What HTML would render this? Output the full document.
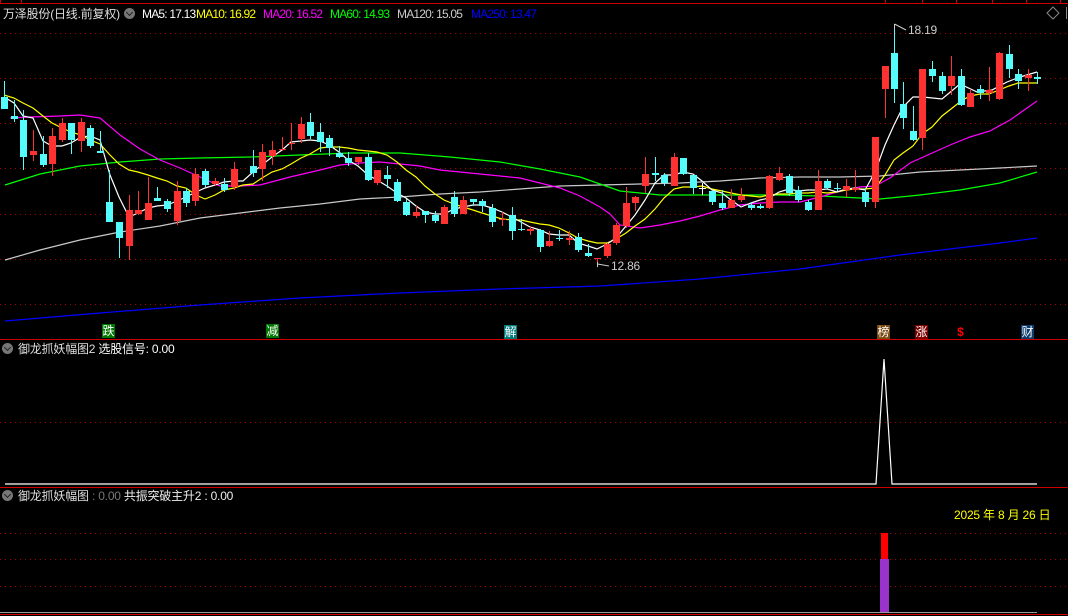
<!DOCTYPE html>
<html><head><meta charset="utf-8"><style>
html,body{margin:0;padding:0;background:#000;}
body{width:1068px;height:616px;overflow:hidden;position:relative;font-family:"Liberation Sans","Noto Sans CJK SC",sans-serif;}
.t{position:absolute;font-size:12px;white-space:nowrap;line-height:14px;letter-spacing:-0.2px;}
.m{letter-spacing:-0.8px;}
.ic{position:absolute;width:11px;height:11px;border-radius:50%;background:#777;}
.ic:after{content:"";position:absolute;left:3px;top:2px;width:4px;height:4px;border-right:1.5px solid #222;border-bottom:1.5px solid #222;transform:rotate(45deg);}
.lb{position:absolute;font-size:12px;line-height:14px;width:13px;height:14px;text-align:center;color:#fff;}
</style></head><body>
<svg width="1068" height="616" style="position:absolute;left:0;top:0">
<g stroke="#c00" stroke-width="1" fill="none">
<line x1="0" y1="3.5" x2="1068" y2="3.5"/>
<line x1="0.5" y1="0" x2="0.5" y2="3"/><line x1="21.5" y1="0" x2="21.5" y2="3"/>
<line x1="885.5" y1="0" x2="885.5" y2="3"/><line x1="922.5" y1="0" x2="922.5" y2="3"/><line x1="956.5" y1="0" x2="956.5" y2="3"/><line x1="992.5" y1="0" x2="992.5" y2="3"/><line x1="1026.5" y1="0" x2="1026.5" y2="3"/><line x1="1060.5" y1="0" x2="1060.5" y2="3"/>
<line x1="0" y1="339.5" x2="1068" y2="339.5"/>
<line x1="0" y1="487.5" x2="1068" y2="487.5"/>
<line x1="0" y1="614.5" x2="1068" y2="614.5"/>
</g>
<g stroke="#a00" stroke-width="1" stroke-dasharray="1,4">
<line x1="0" y1="33.5" x2="1068" y2="33.5"/><line x1="0" y1="78.5" x2="1068" y2="78.5"/><line x1="0" y1="123.5" x2="1068" y2="123.5"/><line x1="0" y1="168.5" x2="1068" y2="168.5"/><line x1="0" y1="214.5" x2="1068" y2="214.5"/><line x1="0" y1="259.5" x2="1068" y2="259.5"/><line x1="0" y1="304.5" x2="1068" y2="304.5"/>
<line x1="0" y1="422.5" x2="1068" y2="422.5"/>
<line x1="0" y1="533.5" x2="1068" y2="533.5"/><line x1="0" y1="559.5" x2="1068" y2="559.5"/><line x1="0" y1="586.5" x2="1068" y2="586.5"/>
</g>
<path d="M1053 7 L1059 13 L1053 19 L1047 13 Z" stroke="#888" fill="none"/>
<line x1="1066.5" y1="7" x2="1066.5" y2="19" stroke="#888"/>
<g fill="none" stroke-width="1.2">
<polyline stroke="#0000ff" points="5,321 100,313 200,305 300,298 400,293 500,289 600,286 700,279 800,269 900,255 1000,243 1037,238"/>
<polyline stroke="#c8c8c8" points="5,260 40,250 80,240 120,232 160,226 200,218 240,213 280,208 320,204 360,199 400,197 440,194 480,192 520,189 560,186 600,185 640,184 680,183 720,181 760,178 800,177 840,177 880,176 920,172 960,170 1000,168 1037,166"/>
<polyline stroke="#00ff00" points="5,185 40,174 80,166 120,162 160,159 200,158 250,157 300,155 350,153 400,153 450,157 500,162 540,169 580,177 620,191 660,195 700,195 740,195 780,195 820,196 860,198 880,199 920,195 960,190 1000,183 1037,172"/>
<polyline stroke="#ff00ff" points="10,118 30,117 60,116 80,115 100,118 120,135 140,149 160,160 180,168 200,177 220,186 240,186 260,185 290,177 320,170 340,165 360,163 380,162 400,164 420,166 440,170 460,172 480,174 500,176 520,178 540,183 560,188 580,196 600,207 610,214 620,225 640,228 660,225 680,221 700,216 720,210 740,205 760,203 780,202 800,202 820,197 840,191 860,187 875,186 890,178 910,163 930,154 950,145 970,137 990,131 1010,120 1037,101"/>
<polyline stroke="#ffff00" points="4,95 14,98 23,103 33,108 43,116 52,123 62,128 71,132 81,135 90,140 100,144 110,155 119,164 129,170 138,172 148,175 157,178 167,181 177,186 186,188 196,195 205,199 215,195 224,190 234,188 243,185 253,184 262,178 272,172 282,169 291,164 301,158 310,154 320,148 329,147 339,147 348,148 358,150 368,151 377,152 387,155 397,162 406,170 416,177 425,186 435,194 444,200 454,204 463,207 473,210 482,213 492,216 502,219 512,220 521,220 530,222 540,224 549,225 559,228 569,233 578,238 588,241 597,243 607,243 616,239 626,233 635,226 645,219 655,209 664,198 674,189 683,187 693,187 702,186 712,189 722,191 731,193 741,195 751,196 760,197 769,195 779,194 789,194 798,193 808,193 818,192 827,193 837,192 846,190 855,189 865,189 875,188 885,175 894,160 903,153 913,146 922,134 932,127 942,116 951,109 961,101 970,96 980,94 989,94 999,90 1009,86 1018,83 1028,83 1037,83"/>
<polyline stroke="#ffffff" points="4,97 14,103 23,116 33,118 43,141 52,146 62,146 71,143 81,137 90,136 100,140 110,175 119,197 129,217 138,213 148,208 157,206 167,205 177,201 186,197 196,192 205,188 215,185 224,182 234,181 243,181 253,172 262,165 272,157 282,150 291,142 301,141 310,140 320,141 329,145 339,152 348,160 358,166 368,175 377,180 387,186 397,193 406,198 416,206 425,212 435,214 444,214 454,209 463,207 473,205 482,205 492,208 502,212 512,217 521,222 530,227 540,230 549,234 559,235 569,235 578,243 588,246 597,249 607,244 616,238 626,226 635,215 645,200 655,183 664,175 674,175 683,172 693,174 702,181 712,190 722,193 731,200 741,207 751,203 760,200 769,198 779,192 789,189 798,191 808,190 818,190 827,189 837,192 846,189 855,188 865,190 875,172 885,145 894,125 903,107 913,97 923,97 942,99 960,84 977,92 992,90 1007,82 1020,77 1037,72"/>
</g>
<path stroke="#54fcfc" stroke-width="1" fill="none" d="M4.5 81V109M14.5 100V122M23.5 110V170M43.5 136V167M71.5 123V154M90.5 125V148M100.5 131V153M109.5 170V222M119.5 222V258M157.5 187V201M167.5 199V212M186.5 188V207M205.5 169V187M224.5 178V192M253.5 150V177M310.5 113V139M320.5 123V152M329.5 135V156M339.5 146V158M348.5 152V166M368.5 153V181M387.5 166V188M397.5 179V202M406.5 199V216M425.5 211V223M435.5 211V223M454.5 191V217M473.5 199V206M482.5 199V212M492.5 204V227M512.5 207V240M521.5 219V231M540.5 229V252M559.5 230V241M578.5 233V252M588.5 244V257M655.5 157V181M664.5 173V186M683.5 158V175M693.5 175V194M712.5 191V205M722.5 190V210M751.5 202V210M760.5 204V209M789.5 174V196M798.5 186V202M808.5 200V211M827.5 179V190M837.5 183V191M865.5 188V207M894.5 24V103M903.5 82V129M913.5 106V141M932.5 61V82M942.5 72V94M961.5 69V106M980.5 85V99M1009.5 45V78M1018.5 69V89M1037.5 72V84"/>
<g fill="#54fcfc">
<rect x="1" y="97" width="7" height="12"/><rect x="11" y="116" width="7" height="3"/><rect x="20" y="120" width="7" height="37"/><rect x="40" y="154" width="7" height="11"/><rect x="68" y="123" width="7" height="17"/><rect x="87" y="128" width="7" height="18"/><rect x="97" y="151" width="7" height="2"/><rect x="106" y="202" width="7" height="20"/><rect x="116" y="222" width="7" height="16"/><rect x="154" y="198" width="7" height="3"/><rect x="164" y="201" width="7" height="8"/><rect x="183" y="191" width="7" height="12"/><rect x="202" y="171" width="7" height="14"/><rect x="221" y="184" width="7" height="6"/><rect x="250" y="166" width="7" height="7"/><rect x="307" y="122" width="7" height="14"/><rect x="317" y="132" width="7" height="10"/><rect x="326" y="138" width="7" height="10"/><rect x="336" y="153" width="7" height="4"/><rect x="345" y="158" width="7" height="5"/><rect x="365" y="157" width="7" height="23"/><rect x="384" y="175" width="7" height="4"/><rect x="394" y="182" width="7" height="19"/><rect x="403" y="202" width="7" height="13"/><rect x="422" y="211" width="7" height="4"/><rect x="432" y="215" width="7" height="6"/><rect x="451" y="197" width="7" height="17"/><rect x="470" y="199" width="7" height="3"/><rect x="479" y="201" width="7" height="5"/><rect x="489" y="208" width="7" height="14"/><rect x="509" y="215" width="7" height="16"/><rect x="518" y="229" width="7" height="1"/><rect x="537" y="230" width="7" height="17"/><rect x="556" y="238" width="7" height="1"/><rect x="575" y="237" width="7" height="13"/><rect x="585" y="253" width="7" height="3"/><rect x="652" y="173" width="7" height="2"/><rect x="661" y="175" width="7" height="8"/><rect x="680" y="158" width="7" height="16"/><rect x="690" y="175" width="7" height="13"/><rect x="709" y="191" width="7" height="11"/><rect x="719" y="203" width="7" height="5"/><rect x="748" y="205" width="7" height="3"/><rect x="757" y="206" width="7" height="2"/><rect x="786" y="176" width="7" height="17"/><rect x="795" y="190" width="7" height="10"/><rect x="805" y="202" width="7" height="8"/><rect x="824" y="181" width="7" height="7"/><rect x="834" y="188" width="7" height="1"/><rect x="862" y="192" width="7" height="10"/><rect x="891" y="53" width="7" height="36"/><rect x="900" y="104" width="7" height="14"/><rect x="910" y="131" width="7" height="9"/><rect x="929" y="69" width="7" height="7"/><rect x="939" y="76" width="7" height="15"/><rect x="958" y="76" width="7" height="29"/><rect x="977" y="89" width="7" height="4"/><rect x="1006" y="54" width="7" height="15"/><rect x="1015" y="74" width="7" height="7"/><rect x="1034" y="77" width="7" height="2"/>
</g>
<path stroke="#ff3232" stroke-width="1" fill="none" d="M33.5 130V161M52.5 128V176M62.5 118V142M81.5 118V152M129.5 195V260M138.5 191V215M148.5 177V220M177.5 181V225M195.5 168V206M215.5 178V186M234.5 162V190M262.5 144V181M272.5 141V165M282.5 137V151M291.5 123V150M301.5 117V143M358.5 157V165M377.5 170V185M416.5 206V218M444.5 205V224M463.5 196V214M502.5 212V226M530.5 226V235M549.5 231V247M569.5 231V245M597.5 258V263M607.5 243V258M616.5 223V245M626.5 187V228M635.5 196V211M645.5 157V193M674.5 153V186M731.5 189V208M741.5 188V202M769.5 175V209M779.5 167V181M818.5 170V210M846.5 179V197M855.5 170V192M875.5 137V208M885.5 66V118M922.5 69V150M951.5 56V95M970.5 89V107M989.5 67V101M999.5 52V100M1028.5 69V91"/>
<g fill="#ff3232">
<rect x="30" y="151" width="7" height="4"/><rect x="49" y="136" width="7" height="28"/><rect x="59" y="123" width="7" height="17"/><rect x="78" y="122" width="7" height="19"/><rect x="126" y="210" width="7" height="36"/><rect x="135" y="210" width="7" height="4"/><rect x="145" y="203" width="7" height="17"/><rect x="174" y="191" width="7" height="30"/><rect x="192" y="174" width="7" height="27"/><rect x="212" y="181" width="7" height="3"/><rect x="231" y="169" width="7" height="18"/><rect x="259" y="152" width="7" height="17"/><rect x="269" y="150" width="7" height="6"/><rect x="279" y="149" width="7" height="1"/><rect x="288" y="143" width="7" height="1"/><rect x="298" y="124" width="7" height="15"/><rect x="355" y="157" width="7" height="5"/><rect x="374" y="170" width="7" height="13"/><rect x="413" y="212" width="7" height="4"/><rect x="441" y="207" width="7" height="17"/><rect x="460" y="200" width="7" height="14"/><rect x="499" y="219" width="7" height="1"/><rect x="527" y="229" width="7" height="2"/><rect x="546" y="241" width="7" height="5"/><rect x="566" y="238" width="7" height="2"/><rect x="594" y="258" width="7" height="1"/><rect x="604" y="244" width="7" height="12"/><rect x="613" y="225" width="7" height="18"/><rect x="623" y="203" width="7" height="23"/><rect x="632" y="197" width="7" height="6"/><rect x="642" y="174" width="7" height="12"/><rect x="671" y="157" width="7" height="29"/><rect x="728" y="200" width="7" height="8"/><rect x="738" y="196" width="7" height="4"/><rect x="766" y="176" width="7" height="32"/><rect x="776" y="173" width="7" height="7"/><rect x="815" y="181" width="7" height="29"/><rect x="843" y="186" width="7" height="4"/><rect x="852" y="188" width="7" height="2"/><rect x="872" y="137" width="7" height="65"/><rect x="882" y="66" width="7" height="23"/><rect x="919" y="69" width="7" height="69"/><rect x="948" y="76" width="7" height="10"/><rect x="967" y="93" width="7" height="14"/><rect x="986" y="90" width="7" height="3"/><rect x="996" y="53" width="7" height="46"/><rect x="1025" y="75" width="7" height="3"/>
</g>
<path stroke="#fff" d="M702.5 183V195M699 188.5H706" fill="none"/>
<path stroke="#ccc" fill="none" d="M894.5 24V30M894.5 24L906 30"/>
<path stroke="#ccc" fill="none" d="M597.5 262V267M597.5 264L609 266"/>
<polyline fill="none" stroke="#fff" stroke-width="1.2" points="5,484 876,484 884,359 892,484 1037,484"/>
<rect x="881" y="533" width="7" height="26" fill="#ff0000"/>
<rect x="880" y="559" width="9" height="53" fill="#9933cc"/>
<line x1="0" y1="612.5" x2="1037" y2="612.5" stroke="#999"/>
</svg>
<div class="t" style="left:3px;top:7px;color:#ddd">万泽股份(日线.前复权)</div>
<span class="ic" style="left:124px;top:8px"></span>
<div class="t m" style="left:142px;top:7px;color:#fff">MA5: 17.13</div>
<div class="t m" style="left:196px;top:7px;color:#ff0">MA10: 16.92</div>
<div class="t m" style="left:263px;top:7px;color:#f0f">MA20: 16.52</div>
<div class="t m" style="left:330px;top:7px;color:#0f0">MA60: 14.93</div>
<div class="t m" style="left:397px;top:7px;color:#ccc">MA120: 15.05</div>
<div class="t m" style="left:471px;top:7px;color:#00f">MA250: 13.47</div>
<div class="t" style="left:908px;top:23px;color:#ccc">18.19</div>
<div class="t" style="left:611px;top:259px;color:#ccc">12.86</div>
<div class="lb" style="left:102px;top:324px;background:#007700">跌</div>
<div class="lb" style="left:266px;top:324px;background:#007700">减</div>
<div class="lb" style="left:504px;top:325px;background:#007b7b">解</div>
<div class="lb" style="left:877px;top:325px;background:#7a4a10">榜</div>
<div class="lb" style="left:915px;top:325px;background:#7a0000">涨</div>
<div class="lb" style="left:954px;top:325px;color:#f00;font-weight:bold">$</div>
<div class="lb" style="left:1021px;top:325px;background:#0d3d6e">财</div>
<span class="ic" style="left:2px;top:343px"></span>
<div class="t" style="left:18px;top:342px;color:#ddd">御龙抓妖幅图2 <span style="color:#fff">选股信号: 0.00</span></div>
<span class="ic" style="left:2px;top:490px"></span>
<div class="t" style="left:18px;top:489px;color:#ddd">御龙抓妖幅图 <span style="color:#777">: 0.00</span> <span style="color:#eee">共振突破主升2 : 0.00</span></div>
<div class="t" style="left:954px;top:508px;color:#ff0">2025 年 8 月 26 日</div>
</body></html>
